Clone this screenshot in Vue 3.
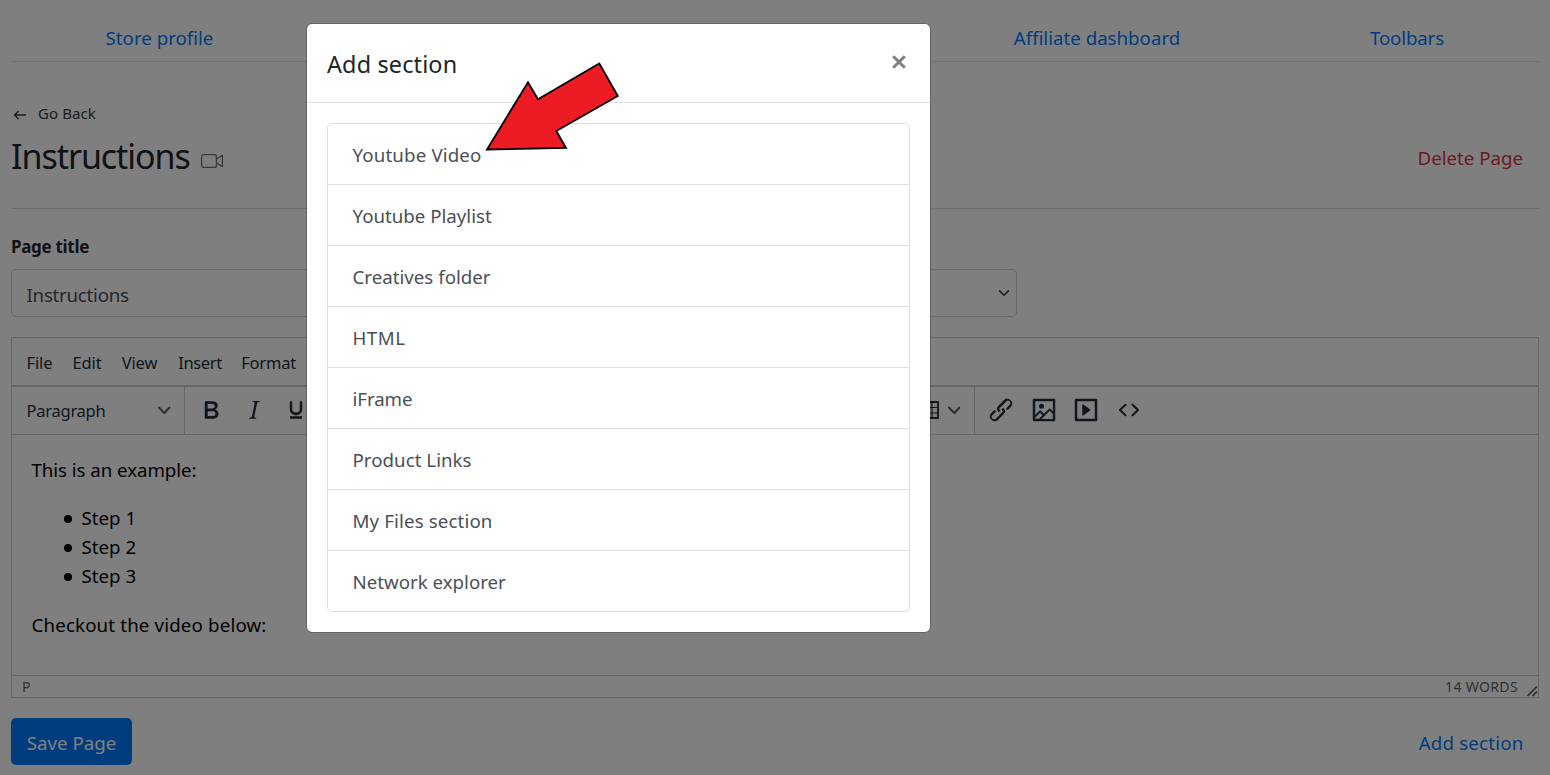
<script setup>
const sections = [
  { label: 'Youtube Video', ls: 0.15 },
  { label: 'Youtube Playlist', ls: 0 },
  { label: 'Creatives folder', ls: 0.01 },
  { label: 'HTML', ls: 0.5 },
  { label: 'iFrame', ls: -0.06 },
  { label: 'Product Links', ls: 0.03 },
  { label: 'My Files section', ls: 0.13 },
  { label: 'Network explorer', ls: 0 },
]
const menus = ['File', 'Edit', 'View', 'Insert', 'Format']
const steps = ['Step 1', 'Step 2', 'Step 3']
const chevron = 'M8.7 2.2c.3-.3.8-.3 1 0 .4.4.4.9 0 1.2L5.7 7.8c-.3.3-.9.3-1.2 0L.2 3.4a.8.8 0 0 1 0-1.2c.3-.3.8-.3 1.1 0L5 6l3.7-3.8z'
const formatIcons = [
  'M7.8 19c-.3 0-.5 0-.6-.2l-.2-.5V5.7c0-.2 0-.4.2-.5l.6-.2h5c1.5 0 2.7.3 3.5 1 .7.6 1.1 1.4 1.1 2.5a3 3 0 0 1-.6 1.9c-.4.6-1 1-1.6 1.2.4.1.9.3 1.3.6s.8.7 1 1.2c.4.4.5 1 .5 1.6 0 1.3-.4 2.3-1.3 3-.8.7-2.1 1-3.8 1H7.8zm5-8.3c.6 0 1.2-.1 1.6-.5.4-.3.6-.7.6-1.3 0-1.1-.8-1.7-2.3-1.7H9.3v3.5h3.4zm.5 6c.7 0 1.3-.1 1.7-.4.4-.4.6-.9.6-1.5s-.2-1-.7-1.4c-.4-.3-1-.4-2-.4H9.4v3.8h4z',
  'M16.7 4.7l-.1.9h-.3c-.6 0-1 0-1.4.3-.3.3-.4.6-.5 1.1l-2.1 9.8v.6c0 .5.4.8 1.4.8h.2l-.2.8H8l.2-.8h.2c1.1 0 1.8-.5 2-1.5l2-9.8.1-.5c0-.6-.4-.8-1.4-.8h-.3l.2-.9h5.8z',
  'M16 5c.6 0 1 .4 1 1v5.5a4 4 0 0 1-.4 1.8l-1 1.4a5.3 5.3 0 0 1-5.5 1 5 5 0 0 1-1.6-1c-.5-.4-.8-.9-1.1-1.4a4 4 0 0 1-.4-1.8V6c0-.6.4-1 1-1s1 .4 1 1v5.5c0 .3 0 .6.2 1l.6.7a3.3 3.3 0 0 0 2.2.8 3.4 3.4 0 0 0 2.2-.8c.3-.2.4-.5.6-.8l.2-.9V6c0-.6.4-1 1-1zM8 17h8c.6 0 1 .4 1 1s-.4 1-1 1H8a1 1 0 0 1 0-2z',
]
const insertIcons = [
  'M6.2 12.3a1 1 0 0 1 1.4 1.4l-2.1 2a2 2 0 1 0 2.7 2.8l4.8-4.8a1 1 0 0 0 0-1.4 1 1 0 1 1 1.4-1.3 2.9 2.9 0 0 1 0 4L9.6 20a3.9 3.9 0 0 1-5.5-5.5l2-2zm11.6-.6a1 1 0 0 1-1.4-1.4l2-2a2 2 0 1 0-2.6-2.8L11 10.3a1 1 0 0 0 0 1.4A1 1 0 1 1 9.6 13a2.9 2.9 0 0 1 0-4L14.4 4a3.9 3.9 0 0 1 5.5 5.5l-2 2z',
  'M5 15.7l3.3-3.2c.3-.3.7-.3 1 0L12 15l4.1-4c.3-.4.8-.4 1 0l2 1.9V5H5v10.7zM5 18V19h3l2.8-2.9-2-2L5 17.9zm14-3l-2.5-2.4-6.4 6.5H19v-4zM4 3h16c.6 0 1 .4 1 1v16c0 .6-.4 1-1 1H4a1 1 0 0 1-1-1V4c0-.6.4-1 1-1zm6 8a2 2 0 1 0 0-4 2 2 0 0 0 0 4z',
  'M4 3h16c.6 0 1 .4 1 1v16c0 .6-.4 1-1 1H4a1 1 0 0 1-1-1V4c0-.6.4-1 1-1zm1 2v14h14V5H5zm4.8 2.6l5.6 4a.5.5 0 0 1 0 .8l-5.6 4A.5.5 0 0 1 9 16V8a.5.5 0 0 1 .8-.4z',
  'M9.8 15.7c.3.3.3.8 0 1-.3.4-.9.4-1.2 0l-4.4-4.1a.8.8 0 0 1 0-1.2l4.4-4.2c.3-.3.9-.3 1.2 0 .3.3.3.8 0 1.1L6 12l3.8 3.7zM14.2 15.7c-.3.3-.3.8 0 1 .4.4.9.4 1.2 0l4.4-4.1c.3-.3.3-.8 0-1.2l-4.4-4.2a.8.8 0 0 0-1.2 0c-.3.3-.3.8 0 1.1L18 12l-3.8 3.7z',
]
</script>

<template>
  <div class="screen">
    <div class="page">
      <nav class="tabs">
        <a class="tab first">Store profile</a>
        <a class="tab gap"></a>
        <a class="tab">Affiliate dashboard</a>
        <a class="tab tight">Toolbars</a>
      </nav>

      <a class="back">
        <svg width="14" height="12" viewBox="0 0 14 12"><path d="M13 6H1.5M5.6 2L1.5 6L5.6 10" fill="none" stroke="#343a40" stroke-width="1.4" /></svg>
        <span>Go Back</span>
      </a>
      <header class="head">
        <h1>Instructions</h1>
        <svg class="cam" width="24" height="16" viewBox="0 0 24 16"><g fill="none" stroke="#6c757d" stroke-width="1.3" stroke-linejoin="round"><rect x="1.6" y="1.6" width="14.8" height="12.8" rx="2" /><path d="M16.4 6L22.4 2.4V13.6L16.4 10" /></g></svg>
        <a class="delete">Delete Page</a>
      </header>

      <label class="label">Page title</label>
      <div class="fields">
        <div class="field"><span>Instructions</span></div>
        <div class="field select">
          <svg width="12" height="8" viewBox="0 0 12 8"><path d="M1.2 1.4L6 6.2L10.8 1.4" fill="none" stroke="#343a40" stroke-width="1.6" /></svg>
        </div>
      </div>

      <section class="editor">
        <div class="menubar"><span v-for="m in menus" :key="m" :class="['menu', 'menu-' + m.toLowerCase()]">{{ m }}</span></div>
        <div class="toolbar">
          <div class="style"><span>Paragraph</span><svg width="12.5" height="12.5" viewBox="0 0 10 10"><path :d="chevron" /></svg></div>
          <div class="group format">
            <svg v-for="d in formatIcons" :key="d" class="icon" viewBox="0 0 24 24"><path :d="d" fill-rule="evenodd" /></svg>
          </div>
          <div class="group table">
            <svg width="22" height="20" viewBox="0 0 22 20"><path d="M1 7.5H21M1 13H21M8 1V19M15 1V19" fill="none" stroke="#222f3e" stroke-width="1.2" /><path d="M1 2H21V18H1z" fill="none" stroke="#222f3e" stroke-width="1.8" /></svg>
            <svg width="12.5" height="12.5" viewBox="0 0 10 10"><path :d="chevron" /></svg>
          </div>
          <div class="group insert">
            <svg v-for="d in insertIcons" :key="d" class="icon" viewBox="0 0 24 24"><path :d="d" fill-rule="evenodd" /></svg>
          </div>
        </div>
        <div class="content">
          <p>This is an example:</p>
          <ul><li v-for="s in steps" :key="s">{{ s }}</li></ul>
          <p class="wide">Checkout the video below:</p>
        </div>
        <div class="status">
          <span>P</span><span class="words">14 WORDS</span>
          <svg width="12" height="12" viewBox="0 0 12 12"><path d="M1.5 11L11 1.5M6.5 11L11 6.5" stroke="#4e5865" stroke-width="1.6" /></svg>
        </div>
      </section>

      <footer class="actions">
        <button class="save">Save Page</button>
        <a class="add">Add section</a>
      </footer>
    </div>

    <div class="backdrop">
      <div class="modal">
        <div class="modal-head">
          <h5>Add section</h5>
          <svg width="16" height="16" viewBox="0 0 16 16"><path d="M2.2 2.2L13.8 13.8M13.8 2.2L2.2 13.8" stroke="#7f7f7f" stroke-width="3" /></svg>
        </div>
        <ul class="list">
          <li v-for="s in sections" :key="s.label" :style="{ letterSpacing: s.ls + 'px' }">{{ s.label }}</li>
        </ul>
      </div>
      <svg class="pointer" width="140" height="100" viewBox="0 0 140 100"><path d="M7 89.5L48 22.3L58 39.2L119.3 3.5L137.8 36L76.3 71L86 88Z" fill="#ed1c24" stroke="#000" stroke-width="1.8" /></svg>
    </div>
  </div>
</template>

<style>
body { margin: 0; }
</style>

<style scoped>
* { box-sizing: border-box; }
.screen {
  position: relative; width: 1550px; height: 775px; overflow: hidden; background: #fff; color: #212529;
  font: 18.7px/30px "Noto Sans", "Open Sans", sans-serif;
}
.page { display: flex; flex-direction: column; padding: 0 11px; }
a { color: #007bff; text-decoration: none; white-space: nowrap; }
.tabs { display: grid; grid-template-columns: 297px 611px 356px 264px; height: 62px; border-bottom: 1px solid #dee2e6; text-align: center; padding-top: 23px; }
.tight { letter-spacing: -.15px; }
.back { display: flex; align-items: center; gap: 11px; height: 20px; margin-top: 41px; padding-left: 2px; color: #343a40; font-size: 15px; line-height: 20px; letter-spacing: .1px; }
.back svg { margin-top: 3px; }
.head { display: flex; align-items: center; height: 86px; padding-bottom: 19px; border-bottom: 1px solid #dfdfdf; }
h1 { margin: 0; font-weight: 400; font-size: 34px; line-height: 44px; letter-spacing: -1.05px; }
.cam { margin: 10px 0 0 10px; }
.delete { margin-left: auto; margin-right: 16px; margin-top: 3px; color: #dc3545; }
.label { margin-top: 26px; height: 24px; font-weight: 700; font-size: 17px; line-height: 24px; letter-spacing: -.31px; }
.fields { display: flex; gap: 12px; margin-top: 10px; }
.field { display: flex; align-items: center; width: 497px; height: 48px; border: 1px solid #ced4da; border-radius: 5px; padding: 3px 0 0 14.5px; color: #495057; letter-spacing: -.25px; }
.select { justify-content: flex-end; padding: 0 6px 0 0; }
.editor { margin-top: 20px; border: 1px solid #ccc; height: 361px; display: flex; flex-direction: column; }
.menubar { display: flex; gap: 20px; height: 49px; padding: 10px 0 0 14.5px; border-bottom: 2px solid #ccc; color: #222f3e; font-size: 16.5px; }
.menu { white-space: nowrap; letter-spacing: -.1px; }
.menu-insert { letter-spacing: -.4px; margin-left: 1px; }
.menu-format { letter-spacing: -.2px; margin-left: -.5px; }
.toolbar { display: flex; height: 48px; border-bottom: 1px solid #ccc; color: #222f3e; }
.toolbar svg { fill: #222f3e; flex: none; }
.style { display: flex; align-items: center; justify-content: space-between; width: 173px; padding: 1px 13.5px 0 14.5px; border-right: 1px solid #ccc; font-size: 16.5px; letter-spacing: -.25px; }
.style > svg { margin-top: -2px; }
.style > svg, .table > svg:last-child { opacity: .75; }
.group { display: flex; align-items: center; padding-bottom: 1px; }
.icon { width: 30px; height: 30px; }
.format { width: 600px; gap: 12.5px; padding-left: 11px; }
.table { width: 190px; justify-content: flex-end; gap: 8.5px; padding-right: 14px; border-right: 1px solid #ccc; }
.insert { gap: 12.5px; padding-left: 11px; }
.content { flex: 1; padding: 20px 20px 20px 19.5px; color: #000; line-height: 29px; }
.content p { margin: 0; letter-spacing: -.05px; }
.content ul { margin: 19px 0 20px; padding-left: 50px; list-style: none; }
.content li { display: flex; align-items: center; margin-left: -18px; gap: 10px; }
.content li::before { content: ""; width: 8px; height: 8px; margin-top: 2px; border-radius: 50%; background: #000; }
.content .wide { letter-spacing: .16px; }
.status { display: flex; align-items: center; height: 22px; border-top: 1px solid #ccc; padding: 0 0 0 10px; font-size: 14px; line-height: 20px; color: #5a6470; }
.words { margin-left: auto; margin-right: 8px; letter-spacing: .36px; }
.status svg { margin-top: 9px; }
.actions { display: flex; justify-content: space-between; align-items: center; margin-top: 20px; height: 47px; padding-right: 15.5px; }
.save { width: 121px; height: 47px; border: 0; border-radius: 5px; background: #007bff; color: #fff; font: inherit; padding: 3px 0 0; white-space: nowrap; }
.add { letter-spacing: .2px; padding-top: 3px; }
.backdrop { position: absolute; inset: 0; background: rgba(0, 0, 0, .5); }
.modal { width: 625px; height: 610px; margin: 23px 0 0 306px; background: #fff; background-clip: padding-box; border: 1px solid rgba(0, 0, 0, .2); border-radius: 6px; }
.modal-head { display: flex; justify-content: space-between; height: 79px; border-bottom: 1px solid #dee2e6; padding: 24px 23px 0 20px; }
h5 { margin: 0; font-weight: 400; font-size: 23.4px; line-height: 32px; letter-spacing: .16px; }
.modal-head svg { margin-top: 6px; }
.list { list-style: none; margin: 20px; padding: 0; border: 1px solid #dfdfdf; border-radius: 5px; color: #495057; }
.list li { height: 61px; line-height: 62px; padding-left: 24.5px; border-bottom: 1px solid #dfdfdf; }
.list li:last-child { border-bottom: 0; height: 60px; }
.pointer { position: absolute; left: 480px; top: 60px; }
</style>
